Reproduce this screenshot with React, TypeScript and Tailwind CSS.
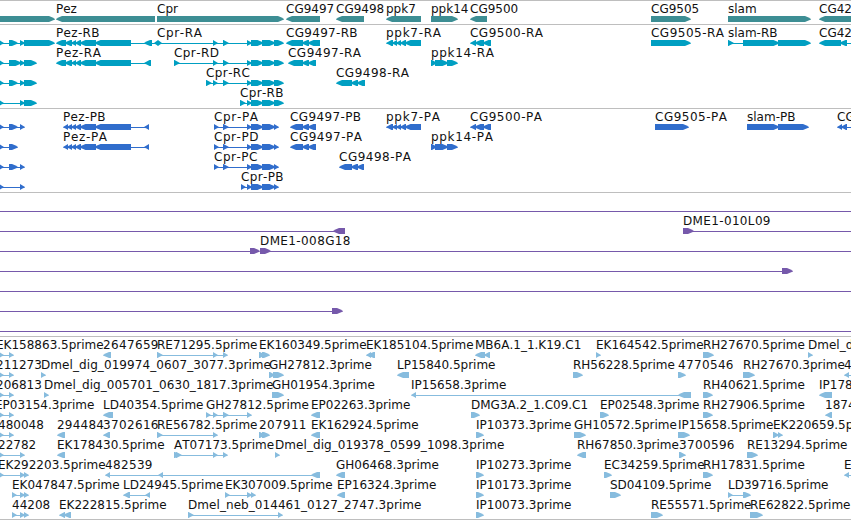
type Dir = 'R' | 'L';
type Exon = [number, number];

interface Feature {
  dir: Dir;
  exons: Exon[];
  label?: string;
  labelX?: number;
  line?: [number, number];
}

const f = (dir: Dir, exons: Exon[], label?: string, labelX?: number, line?: [number, number]): Feature => ({
  dir,
  exons,
  label,
  labelX,
  line,
});

// Advance widths, in pixels, of labels that are set wider than the font's own metrics.
const labelWidths: Record<string, number> = {
  'Pez-RB': 43.5,
  'Pez-RA': 45,
  'Cpr-RA': 45,
  'Cpr-RD': 45,
  'Cpr-RC': 44,
  'Cpr-RB': 43.5,
  'CG9497-RB': 71.5,
  'CG9497-RA': 73,
  'CG9498-RA': 73,
  'ppk7-RA': 55,
  'ppk14-RA': 63,
  'CG9500-RA': 73,
  'CG9505-RA': 73,
  'slam-RB': 49.5,
  'Pez-PB': 42.5,
  'Pez-PA': 44,
  'Cpr-PA': 44,
  'Cpr-PD': 44.5,
  'Cpr-PC': 43.5,
  'Cpr-PB': 42.5,
  'CG9497-PB': 71,
  'CG9497-PA': 72,
  'CG9498-PA': 72,
  'ppk7-PA': 54,
  'ppk14-PA': 62,
  'CG9500-PA': 72,
  'CG9505-PA': 72,
  'slam-PB': 48.5,
  'DME1-008G18': 90.5,
  'DME1-010L09': 87.5,
  '2647659': 55.5,
  '3702616': 55.5,
  '4770546': 55.5,
  '3700596': 55.5,
  '294484': 47,
  '482539': 47.5,
  '207911': 47.5,
  'Dmel_dig_019974_0607_3077.3prime': 230,
  'Dmel_dig_005701_0630_1817.3prime': 229.5,
  'Dmel_dig_019378_0599_1098.3prime': 229.5,
  'Dmel_neb_014461_0127_2747.3prime': 233.5,
};

const cprTail: Exon[] = [[247, 251], [251, 262], [262, 274], [274, 284]];
const cprCoding: Exon[] = [[247, 251], [251, 262], [262, 274], [274, 279]];
const pezBody: Exon[] = [[66, 72], [72, 76], [76, 81], [81, 96], [96, 131]];
const pezCoding: Exon[] = [[63, 68], [68, 72], [72, 76], [76, 81], [81, 96], [96, 131], [144, 149]];
const ppk7: Exon[] = [[386, 393], [393, 397], [397, 401], [401, 406], [406, 421]];
const ppk14: Exon[] = [[431, 436], [435, 447], [447, 458]];
const cg9500: Exon[] = [[470, 476], [476, 484], [484, 491]];

const genes: Feature[][] = [
  [
    f('R', [[-10, 55]]),
    f('L', [[56, 155]], 'Pez'),
    f('R', [[157, 284]], 'Cpr'),
    f('L', [[286, 320]], 'CG9497'),
    f('L', [[336, 364]], 'CG9498'),
    f('L', [[386, 421]], 'ppk7'),
    f('R', [[431, 458]], 'ppk14'),
    f('L', [[470, 487]], 'CG9500'),
    f('R', [[651, 691]], 'CG9505'),
    f('R', [[728, 811]], 'slam'),
    f('L', [[819, 880]], 'CG42'),
  ],
];

const transcripts: Feature[][] = [
  [
    f('R', [[-1, 4], [9, 18], [20, 24], [24, 55]]),
    f('L', [[56, 66], ...pezBody, [144, 152]], 'Pez-RB'),
    f('L', [[154, 158]], undefined, undefined, [152, 162]),
    f('R', [[158, 162], [213, 218], [223, 229], ...cprTail], 'Cpr-RA', 157),
    f('L', [[286, 303], [303, 309], [309, 320]], 'CG9497-RB'),
    f('L', ppk7, 'ppk7-RA'),
    f('L', cg9500, 'CG9500-RA'),
    f('R', [[651, 691]], 'CG9505-RA'),
    f('R', [[728, 734], [743, 778], [778, 811]], 'slam-RB'),
    f('L', [[819, 841], [841, 847]], 'CG42', undefined, [841, 860]),
  ],
  [
    f('R', [[-1, 4], [9, 20], [20, 24], [24, 37]]),
    f('L', [[56, 66], ...pezBody, [144, 151]], 'Pez-RA'),
    f('R', [[174, 180], [213, 218], [223, 229], ...cprTail], 'Cpr-RD'),
    f('L', [[288, 303], [303, 309], [309, 316]], 'CG9497-RA'),
    f('R', ppk14, 'ppk14-RA'),
  ],
  [
    f('R', [[-1, 4], [9, 18], [20, 24], [24, 37]]),
    f('R', [[206, 212], [213, 218], [223, 229], ...cprTail], 'Cpr-RC'),
    f('L', [[336, 352], [352, 358], [358, 365]], 'CG9498-RA'),
  ],
  [f('R', [[-1, 4], [20, 24], [24, 37]]), f('R', [[240, 246], ...cprTail], 'Cpr-RB')],
];

const proteins: Feature[][] = [
  [
    f('R', [[-1, 4], [9, 18], [20, 25]]),
    f('L', pezCoding, 'Pez-PB'),
    f('R', [[214, 219], [223, 229], ...cprCoding], 'Cpr-PA'),
    f('L', [[290, 303], [303, 309], [309, 316]], 'CG9497-PB'),
    f('L', ppk7, 'ppk7-PA'),
    f('L', cg9500, 'CG9500-PA'),
    f('R', [[655, 689]], 'CG9505-PA'),
    f('R', [[747, 778], [778, 809]], 'slam-PB'),
    f('L', [[837, 842], [842, 847]], 'CG42', undefined, [842, 860]),
  ],
  [
    f('R', [[-1, 4], [9, 18]]),
    f('L', pezCoding, 'Pez-PA'),
    f('R', [[214, 219], [223, 229], ...cprCoding], 'Cpr-PD'),
    f('L', [[290, 303], [303, 309], [309, 316]], 'CG9497-PA'),
    f('R', ppk14, 'ppk14-PA'),
  ],
  [
    f('R', [[-1, 4], [9, 18], [20, 25]]),
    f('R', [[214, 219], [223, 229], ...cprCoding], 'Cpr-PC'),
    f('L', [[339, 352], [352, 358], [358, 364]], 'CG9498-PA'),
  ],
  [f('R', [[-1, 4], [20, 25]]), f('R', [[241, 246], ...cprCoding], 'Cpr-PB')],
];

const bacs: Feature[][] = [
  [f('R', [], undefined, undefined, [0, 851])],
  [
    f('L', [[333, 345]], undefined, undefined, [0, 340]),
    f('R', [[683, 694]], 'DME1-010L09', undefined, [688, 851]),
  ],
  [
    f('R', [[250, 260]], undefined, undefined, [0, 255]),
    f('R', [[260, 271]], 'DME1-008G18', undefined, [265, 851]),
  ],
  [f('R', [[782, 793]], undefined, undefined, [0, 785])],
  [f('R', [], undefined, undefined, [0, 851])],
  [f('R', [[332, 343]], undefined, undefined, [0, 335])],
  [f('R', [], undefined, undefined, [0, 851])],
];

const ests: Feature[][] = [
  [
    f('R', [[-1, 4], [9, 14]], 'EK158863.5prime', -4),
    f('L', [[103, 111]], '2647659'),
    f('R', [[157, 163], [213, 218], [223, 228]], 'RE71295.5prime'),
    f('R', [[259, 264], [262, 270]], 'EK160349.5prime'),
    f('L', [[366, 371], [369, 375]], 'EK185104.5prime'),
    f('L', [[475, 485], [485, 490]], 'MB6A.1_1.K19.C1'),
    f('R', [[596, 601]], 'EK164542.5prime'),
    f('R', [[703, 714]], 'RH27670.5prime'),
    f('R', [[808, 813]], 'Dmel_dig'),
  ],
  [
    f('R', [[-1, 4], [9, 14]], '211273', -4),
    f('R', [[41, 46]], 'Dmel_dig_019974_0607_3077.3prime'),
    f('R', [[269, 274], [273, 284]], 'GH27812.3prime'),
    f('L', [[397, 409]], 'LP15840.5prime'),
    f('R', [[573, 583]], 'RH56228.5prime'),
    f('R', [[678, 686]], '4770546'),
    f('R', [[743, 755]], 'RH27670.3prime'),
    f('L', [[844, 849]], '4', 844, [846, 851]),
  ],
  [
    f('R', [[-1, 4], [9, 14]], '206813', -4),
    f('R', [[44, 49]], 'Dmel_dig_005701_0630_1817.3prime'),
    f('R', [[272, 284]], 'GH01954.3prime'),
    f('L', [[411, 416], [678, 691]], 'IP15658.3prime'),
    f('R', [[703, 713]], 'RH40621.5prime'),
    f('L', [[819, 832]], 'IP178'),
  ],
  [
    f('R', [[-1, 4], [9, 14]], 'EP03154.3prime', -5),
    f('L', [[103, 113]], 'LD40354.5prime'),
    f('R', [[206, 211], [213, 218], [223, 229], [247, 252]], 'GH27812.5prime'),
    f('L', [[311, 320]], 'EP02263.3prime'),
    f('R', [[471, 480]], 'DMG3A.2_1.C09.C1'),
    f('R', [[600, 609]], 'EP02548.3prime'),
    f('R', [[703, 713]], 'RH27906.5prime'),
    f('L', [[825, 832]], '1874'),
  ],
  [
    f('R', [[-1, 4], [9, 14]], '480048', -2),
    f('L', [[57, 65]], '294484'),
    f('L', [[103, 110]], '3702616'),
    f('R', [[157, 163], [213, 218]], 'RE56782.5prime'),
    f('R', [[259, 264], [262, 270]], '207911'),
    f('L', [[311, 320]], 'EK162924.5prime'),
    f('R', [[476, 484]], 'IP10373.3prime'),
    f('R', [[574, 586]], 'GH10572.5prime'),
    f('R', [[678, 690]], 'IP15658.5prime'),
    f('R', [[773, 778], [778, 783]], 'EK220659.5prime'),
  ],
  [
    f('R', [[-1, 4], [20, 25]], '22782', -2),
    f('L', [[57, 65]], 'EK178430.5prime'),
    f('R', [[174, 179], [176, 182], [213, 218], [223, 228]], 'AT07173.5prime'),
    f('R', [[275, 280]], 'Dmel_dig_019378_0599_1098.3prime'),
    f('L', [[577, 586]], 'RH67850.3prime'),
    f('R', [[679, 686]], '3700596'),
    f('R', [[747, 758]], 'RE13294.5prime'),
  ],
  [
    f('R', [[-1, 4], [20, 24], [24, 29]], 'EK292203.5prime', -2),
    f('L', [[105, 110], [158, 163], [311, 320]], '482539'),
    f('L', [[336, 345]], 'GH06468.3prime'),
    f('R', [[476, 484]], 'IP10273.3prime'),
    f('R', [[604, 612]], 'EC34259.5prime'),
    f('R', [[703, 713]], 'RH17831.5prime'),
    f('L', [[844, 849]], 'E', 844, [846, 851]),
  ],
  [
    f('R', [[12, 17], [20, 24], [24, 29]], 'EK047847.5prime'),
    f('L', [[123, 130], [145, 150]], 'LD24945.5prime'),
    f('R', [[225, 230], [247, 251], [251, 256]], 'EK307009.5prime'),
    f('L', [[337, 345]], 'EP16324.3prime'),
    f('R', [[476, 484]], 'IP10173.3prime'),
    f('R', [[610, 621]], 'SD04109.5prime'),
    f('R', [[728, 733], [743, 751]], 'LD39716.5prime'),
  ],
  [
    f('R', [[12, 17], [20, 24], [24, 29]], '44208'),
    f('L', [[59, 65], [65, 71]], 'EK222815.5prime'),
    f('R', [[188, 194], [278, 283]], 'Dmel_neb_014461_0127_2747.3prime'),
    f('R', [[476, 484]], 'IP10073.3prime'),
    f('R', [[651, 663]], 'RE55571.5prime'),
    f('R', [[750, 763]], 'RE62822.5prime'),
  ],
];

function arrow([a, b]: Exon, dir: Dir, y: number) {
  const w = b - a;
  const tip = w > 7 ? 6 : Math.min(w, 5.5);
  const shoulder = w > 7 ? 1.2 : 1.5;
  const at = (x: number, dy: number) => `${dir === 'R' ? x : a + b - x} ${y + dy}`;
  return `M${at(a, 0)}L${at(b - tip, 0)}L${at(b - tip / 2, shoulder)}L${at(b, 2.9)}L${at(b, 3.4)}L${at(
    b - tip / 2,
    6 - shoulder,
  )}L${at(b - tip, 6)}L${at(a, 6)}Z`;
}

// Neighbouring exons run into each other: the tip of one reaches over the base of the next.
function joined(exons: Exon[], i: number, dir: Dir): Exon {
  const [a, b] = exons[i];
  const next = exons[i + 1];
  const prev = exons[i - 1];
  if (dir === 'R' && next && next[0] - b <= 0) return [a, b + 1.5];
  if (dir === 'L' && prev && a - prev[1] <= 0) return [a - 1.5, b];
  return [a, b];
}

function Glyph({ feature, y }: { feature: Feature; y: number }) {
  const { dir, exons, label, labelX, line } = feature;
  const span = line ?? (exons.length > 1 ? [exons[0][0] + 2, exons[exons.length - 1][1] - 2] : null);
  return (
    <g>
      {span && <rect x={span[0]} y={y + 3} width={span[1] - span[0]} height={1} />}
      {exons.map((_, i) => (
        <path key={i} d={arrow(joined(exons, i, dir), dir, y)} />
      ))}
      {label && (
        <text
          x={labelX ?? exons[0][0]}
          y={y - 3}
          textLength={labelWidths[label]}
          className="fill-[#111]"
        >
          {label}
        </text>
      )}
    </g>
  );
}

function Track({ rows, top, className }: { rows: Feature[][]; top: number; className: string }) {
  return (
    <section className={`w-full shrink-0 overflow-hidden border-t border-[#bebebe] ${className}`}>
      <svg className="block h-full w-full overflow-hidden text-[12px] [font-kerning:none]">
        {rows.map((row, r) =>
          row.map((feature, i) => <Glyph key={`${r}-${i}`} feature={feature} y={top + r * 20} />),
        )}
      </svg>
    </section>
  );
}

export default function App() {
  return (
    <main className="flex h-[520px] w-[851px] flex-col overflow-hidden border-b border-[#bebebe] bg-white font-['DejaVu_Sans',sans-serif]">
      <Track rows={genes} top={15} className="h-[24px] fill-[#3d8e94]" />
      <Track rows={transcripts} top={15} className="h-[84px] fill-[#009fc2]" />
      <Track rows={proteins} top={15} className="h-[84px] fill-[#306dcc]" />
      <Track rows={bacs} top={15} className="h-[144px] fill-[#7659ab]" />
      <Track rows={ests} top={15} className="h-[183px] fill-[#87bcde]" />
    </main>
  );
}
